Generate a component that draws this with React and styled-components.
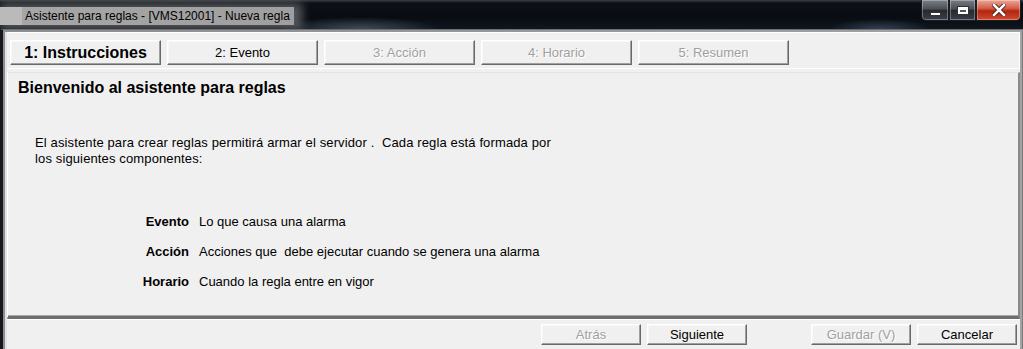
import { Fragment } from "react";
import styled, { createGlobalStyle } from "styled-components";

const GlobalStyle = createGlobalStyle`
  html, body {
    margin: 0;
    padding: 0;
    background: #0c1016;
  }
  body {
    font-family: "Liberation Sans", Arial, sans-serif;
  }
  * {
    box-sizing: border-box;
  }
`;

const Window = styled.div`
  width: 1023px;
  height: 349px;
  display: flex;
  flex-direction: column;
  overflow: hidden;
  background: #0c1016;
`;

const TitleBar = styled.div`
  height: 29px;
  flex: none;
  display: flex;
  justify-content: space-between;
  align-items: flex-start;
  background:
    radial-gradient(ellipse 80px 12px at 360px 29px, rgba(110, 130, 150, 0.5), transparent),
    radial-gradient(ellipse 50px 10px at 880px 29px, rgba(90, 120, 150, 0.45), transparent),
    linear-gradient(#3a3f46 0, #0c1016 3px, #090d13 60%, #10161e 100%);
`;

const TitleGlow = styled.div`
  margin-top: 7px;
  height: 18px;
  display: flex;
  align-items: center;
  gap: 3px;
  padding-right: 4px;
  background: linear-gradient(to right, #b3b3b3 0, #a6a6a6 22px, #9f9f9f 100%);
  box-shadow: 4px 0 10px 4px rgba(150, 150, 150, 0.55);
`;

const AppIcon = styled.div`
  width: 22px;
  height: 18px;
  background: #bababa;
`;

const TitleText = styled.span`
  font-size: 12px;
  color: #000;
  white-space: nowrap;
`;

const Controls = styled.div`
  display: flex;
  margin-right: 2px;
`;

const glass = "linear-gradient(#7a7f86 0%, #4a4f56 45%, #262a30 52%, #3a4048 100%)";
const red = "linear-gradient(#e9a899 0%, #d55a44 42%, #b3260f 55%, #cf4a30 100%)";

const CtrlButton = styled.div`
  width: ${(p) => p.$w}px;
  height: 21px;
  display: flex;
  align-items: center;
  justify-content: center;
  background: ${(p) => (p.$close ? red : glass)};
  border: 1px solid #1a1d21;
  border-top: none;
  box-shadow: inset 0 0 0 1px rgba(255, 255, 255, 0.3);
  border-radius: ${(p) => p.$radius || "0"};
`;

const MinGlyph = styled.div`
  width: 11px;
  height: 4px;
  margin-top: 7px;
  background: #fff;
  border: 1px solid #333;
`;

const MaxGlyph = styled.div`
  width: 12px;
  height: 9px;
  border: 1px solid #333;
  background: #fff;
  display: flex;
  align-items: flex-end;
  justify-content: center;
  padding-bottom: 2px;

  &::after {
    content: "";
    width: 6px;
    height: 2px;
    background: #555;
  }
`;

const Frame = styled.div`
  flex: 1;
  min-height: 0;
  display: flex;
  flex-direction: column;
  border-left: 3px solid #15181c;
  border-top: 1px solid #6b6e72;
  border-right: 1px solid #7a7a7a;
  background: linear-gradient(to right, #8d8d8d, #a3a3a3);
  padding: 2px 2px 0 2px;
`;

const Body = styled.div`
  flex: 1;
  min-height: 0;
  display: flex;
  flex-direction: column;
  background: #f0f0f0;
  border-left: 2px solid #e3e3e3;
`;

const TabStrip = styled.div`
  height: 37px;
  flex: none;
  display: flex;
  gap: 6px;
  padding: 7px 0 0 3px;
  border-top: 1px solid #fff;
  border-right: 1px solid #fff;
  border-bottom: 1px solid #fff;
`;

const Bevel = styled.div`
  display: flex;
  align-items: center;
  justify-content: center;
  background: #f0f0f0;
  border: 1px solid;
  border-color: #fff #696969 #696969 #fff;
  box-shadow: inset -1px -1px 0 #a0a0a0, inset 1px 1px 0 #f8f8f8;
  white-space: nowrap;
  color: ${(p) => (p.$disabled ? "#a0a0a0" : "#000")};
  text-shadow: ${(p) => (p.$disabled ? "1px 1px 0 #fff" : "none")};
`;

const TabButton = styled(Bevel)`
  width: 151px;
  height: 25px;
  font-size: ${(p) => (p.$active ? "16px" : "13px")};
  font-weight: ${(p) => (p.$active ? 700 : 400)};
`;

const Panel = styled.div`
  flex: 1;
  min-height: 0;
  margin-top: 3px;
  padding: 6px 0 0 10px;
  border-top: 1px solid #e3e3e3;
  border-left: 1px solid #fff;
  border-right: 2px solid #8a8a8a;
  border-bottom: 3px solid #6e6e6e;
  box-shadow: inset 0 -1px 0 #a8a8a8;
  color: #000;
`;

const Heading = styled.h1`
  margin: 0;
  font-size: 16px;
  line-height: 18px;
  font-weight: 700;
`;

const Intro = styled.p`
  margin: 38px 0 0 17px;
  font-size: 13px;
  line-height: 16px;
  letter-spacing: 0.13px;
  white-space: pre;
`;

const Parts = styled.dl`
  margin: 47px 0 0 0;
  display: grid;
  grid-template-columns: 171px 1fr;
  column-gap: 10px;
  row-gap: 14px;
  font-size: 13px;
  line-height: 16px;
`;

const Term = styled.dt`
  text-align: right;
  font-weight: 700;
`;

const Desc = styled.dd`
  margin: 0;
  white-space: pre;
`;

const Footer = styled.div`
  height: 30px;
  flex: none;
  display: flex;
  justify-content: flex-end;
  align-items: flex-start;
  gap: 6px;
  padding: 4px 3px 0 0;
  border-top: 1px solid #fff;
`;

const FooterButton = styled(Bevel)`
  width: 100px;
  height: 21px;
  font-size: 13px;
  margin-left: ${(p) => p.$gapBefore || 0}px;
`;

const tabs = [
  { label: "1: Instrucciones", active: true },
  { label: "2: Evento" },
  { label: "3: Acción", disabled: true },
  { label: "4: Horario", disabled: true },
  { label: "5: Resumen", disabled: true },
];

const parts = [
  ["Evento", "Lo que causa una alarma"],
  ["Acción", "Acciones que  debe ejecutar cuando se genera una alarma"],
  ["Horario", "Cuando la regla entre en vigor"],
];

export default function App() {
  return (
    <Window>
      <GlobalStyle />
      <TitleBar>
        <TitleGlow>
          <AppIcon />
          <TitleText>Asistente para reglas - [VMS12001] - Nueva regla</TitleText>
        </TitleGlow>
        <Controls>
          <CtrlButton $w={28} $radius="0 0 0 5px">
            <MinGlyph />
          </CtrlButton>
          <CtrlButton $w={27}>
            <MaxGlyph />
          </CtrlButton>
          <CtrlButton $w={45} $close $radius="0 0 5px 0">
            <svg width="14" height="12" viewBox="0 0 14 12">
              <path
                d="M2 1 L12 11 M12 1 L2 11"
                stroke="#3a1208"
                strokeWidth="4.2"
                strokeLinecap="square"
              />
              <path
                d="M2 1 L12 11 M12 1 L2 11"
                stroke="#fff"
                strokeWidth="2.6"
                strokeLinecap="square"
              />
            </svg>
          </CtrlButton>
        </Controls>
      </TitleBar>
      <Frame>
        <Body>
          <TabStrip>
            {tabs.map((t) => (
              <TabButton key={t.label} $active={t.active} $disabled={t.disabled}>
                {t.label}
              </TabButton>
            ))}
          </TabStrip>
          <Panel>
            <Heading>Bienvenido al asistente para reglas</Heading>
            <Intro>
              {"El asistente para crear reglas permitirá armar el servidor .  Cada regla está formada por\nlos siguientes componentes:"}
            </Intro>
            <Parts>
              {parts.map(([term, desc]) => (
                <Fragment key={term}>
                  <Term>{term}</Term>
                  <Desc>{desc}</Desc>
                </Fragment>
              ))}
            </Parts>
          </Panel>
          <Footer>
            <FooterButton $disabled>Atrás</FooterButton>
            <FooterButton>Siguiente</FooterButton>
            <FooterButton $disabled $gapBefore={58}>
              Guardar (V)
            </FooterButton>
            <FooterButton>Cancelar</FooterButton>
          </Footer>
        </Body>
      </Frame>
    </Window>
  );
}
